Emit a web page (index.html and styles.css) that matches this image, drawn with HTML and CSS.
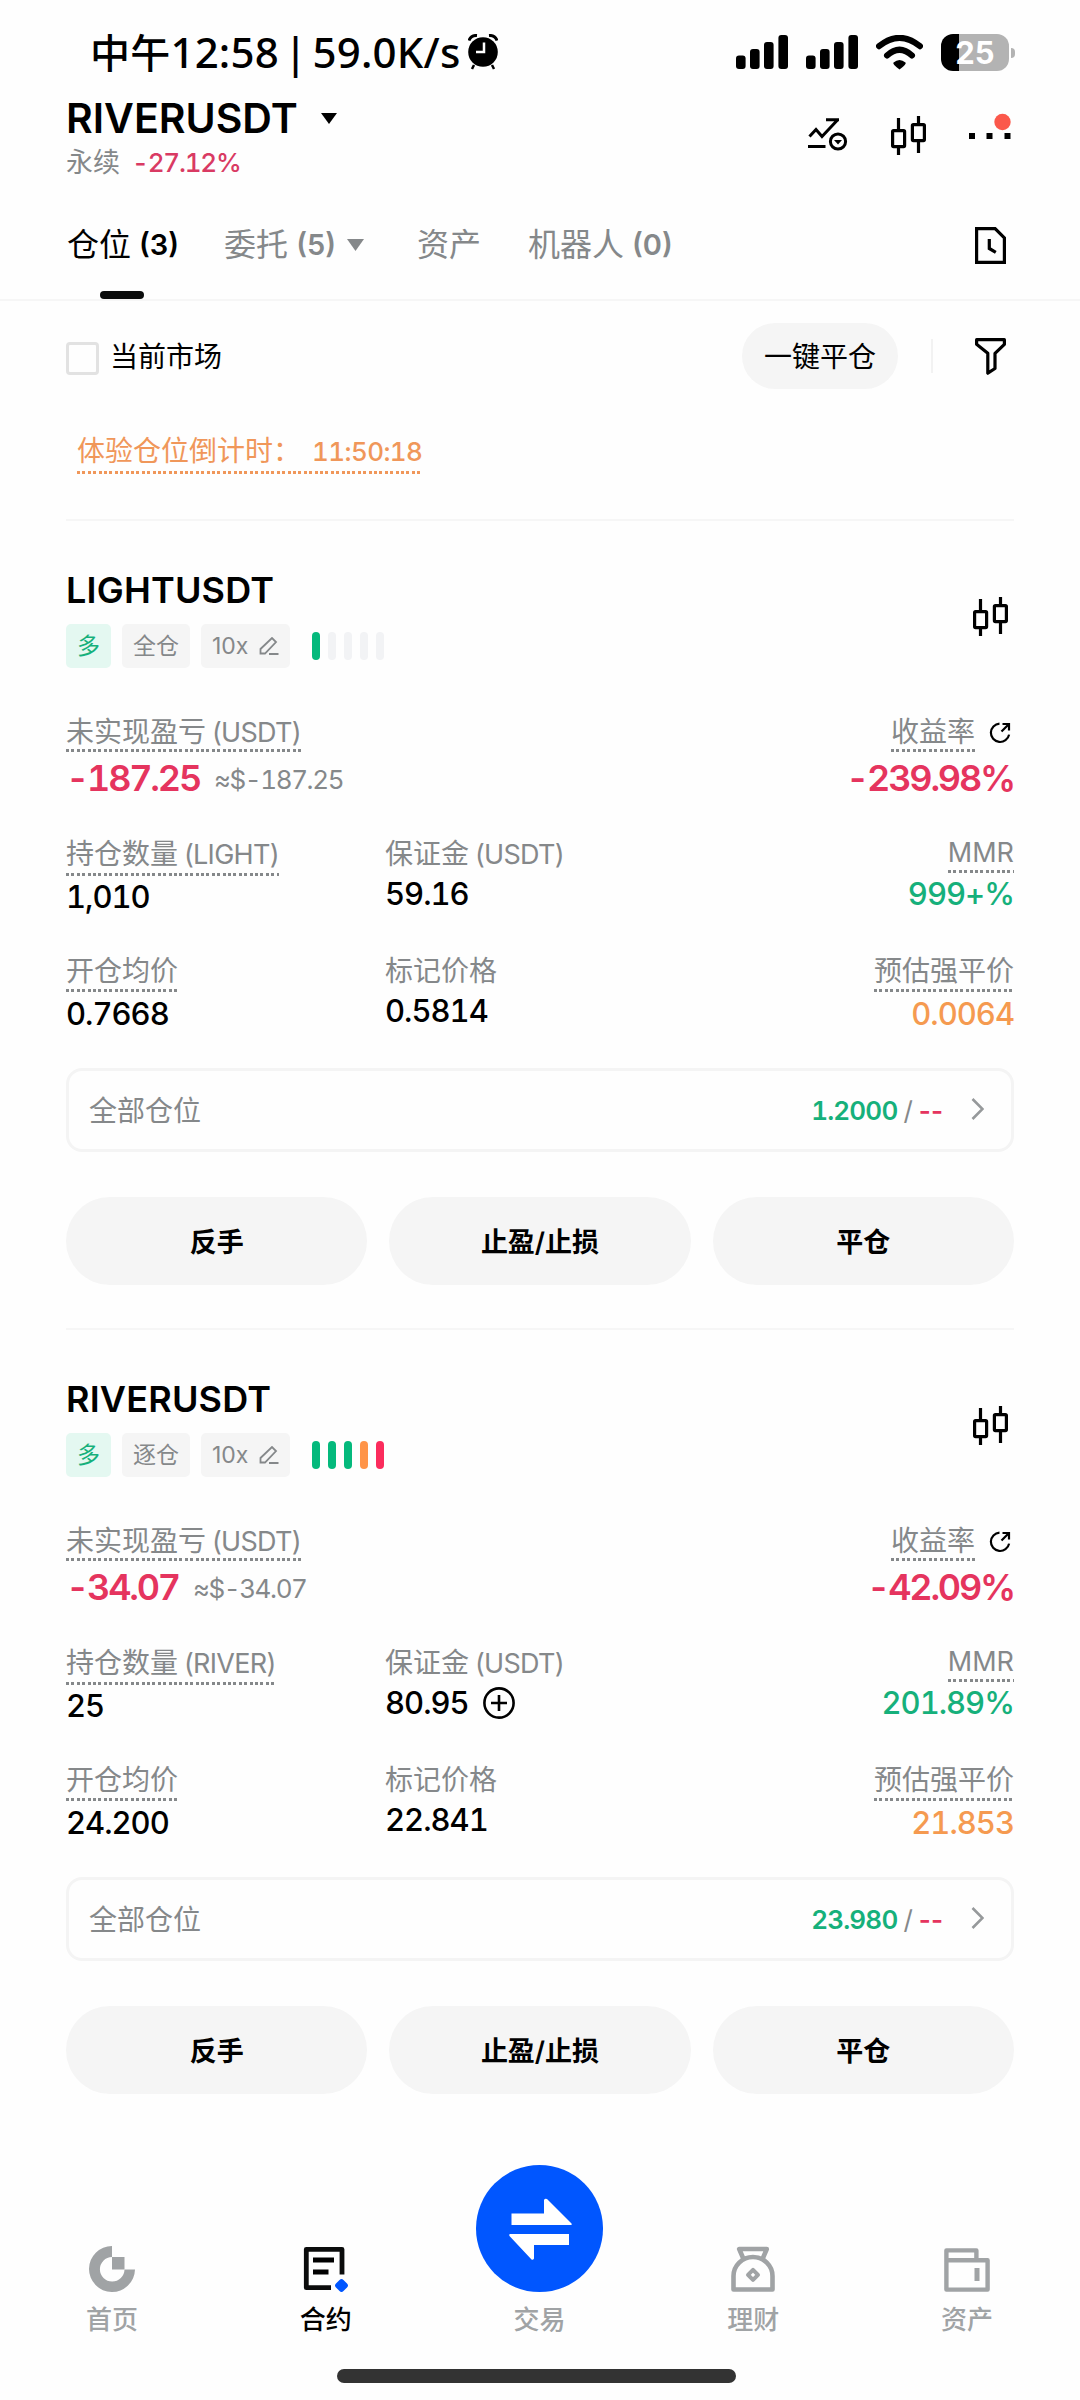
FILE: index.html
```html
<!DOCTYPE html>
<html lang="zh-CN">
<head>
    <meta charset="UTF-8">
    <meta name="viewport" content="width=device-width, initial-scale=1.0">
    <title>RIVERUSDT 永续</title>
    <link rel="stylesheet" href="styles.css">
</head>
<body>
    <!-- Shared icons -->
    <svg class="sprite">
        <symbol id="candles" viewBox="0 0 35 39">
            <g fill="none" stroke="#000" stroke-width="3.2">
                <path d="M7.5 2v12M7.5 31v8M27.5 0v8M27.5 25v12"/>
                <rect x="1.6" y="14.6" width="12" height="16" rx="1"/>
                <rect x="21.4" y="8.6" width="12" height="16" rx="1"/>
            </g>
        </symbol>
        <symbol id="signal" viewBox="0 0 52 34">
            <rect x="0" y="20.5" width="9.6" height="13.5" rx="3"/>
            <rect x="14" y="14" width="9.6" height="20" rx="3"/>
            <rect x="28" y="7" width="9.6" height="27" rx="3"/>
            <rect x="42.4" y="0" width="9.6" height="34" rx="3"/>
        </symbol>
        <symbol id="edit" viewBox="0 0 20 18">
            <path d="M1.500 16.500v-4.500L13 1l4 4L6 16.500zM10 17h9.500" fill="none" stroke="#85888a" stroke-width="1.800"/>
        </symbol>
        <symbol id="share" viewBox="0 0 22 22">
            <path d="M10.500 1.600a9.200 9.200 0 1 0 9.600 11M12.500 9.500l7-7M13.500 2h6.500v6.500" fill="none" stroke="#000" stroke-width="2.200"/>
        </symbol>
        <symbol id="chevron" viewBox="0 0 13 22">
            <path d="M1.500 1l10 10-10 10" fill="none" stroke="#96999b" stroke-width="2.600"/>
        </symbol>
    </svg>

    <div class="status">
        <span class="status-text"><span class="cn">中午</span>12:58 | 59.0K/s</span>
        <svg class="alarm" width="30" height="36" viewBox="0 0 30 36">
            <path d="M1 6.500Q3 1 9 1.500M29 6.500Q27 1 21 1.500" fill="none" stroke="#000" stroke-width="3"/>
            <circle cx="15" cy="18" r="14.800"/>
            <path d="M6 31l-2 4M24 31l2 4" stroke="#000" stroke-width="2.500"/>
            <path d="M16 8.500V18H8" fill="none" stroke="#fff" stroke-width="2.500"/>
        </svg>
        <div class="status-icons">
            <svg width="52" height="34"><use href="#signal"/></svg>
            <svg width="52" height="34"><use href="#signal"/></svg>
            <svg width="47" height="35" viewBox="0 0 47 35">
                <path d="M3 11.200Q23.500-5.500 44 11.200M11 20.500Q23.500 9 36 20.500" fill="none" stroke="#000" stroke-width="6" stroke-linecap="round"/>
                <path d="M17.500 27.500q6-5 12 0 1.500 1.500-6 7-7.500-5.500-6-7z"/>
            </svg>
            <div class="battery"><span>25</span></div>
        </div>
    </div>

    <header class="header">
        <div>
            <h1>RIVERUSDT <svg width="16" height="11"><path d="M0 0h16l-8 11z"/></svg></h1>
            <p class="sub">永续 <span class="en">-27.12%</span></p>
        </div>
        <div class="header-icons">
            <svg width="40" height="34" viewBox="0 0 40 34">
                <path d="M1.500 18.500l6.500-7 6 7L29.500 2M18 1.700h13M0 28.500h17.500" fill="none" stroke="#000" stroke-width="3"/>
                <circle cx="30" cy="23.500" r="7.600" fill="none" stroke="#000" stroke-width="3"/>
                <path d="M26 22h8l-4 4.500z"/>
            </svg>
            <svg width="35" height="39"><use href="#candles"/></svg>
            <svg class="more" width="42" height="39" viewBox="0 0 42 39">
                <path d="M0 17h6v6H0zM17.500 17h6v6h-6zM35.500 17h6v6h-6z"/>
                <circle cx="33.500" cy="6" r="8.200" fill="#fb584b"/>
            </svg>
        </div>
    </header>

    <nav class="tabs">
        <a class="tab active">仓位 <span class="en">(3)</span></a>
        <a class="tab tab-orders">委托 <span class="en">(5)</span><svg width="17" height="12"><path d="M0 0h17l-8.500 12z" fill="#85888a"/></svg></a>
        <a class="tab tab-assets">资产</a>
        <a class="tab">机器人 <span class="en">(0)</span></a>
        <svg class="history" width="31" height="37" viewBox="0 0 31 37">
            <path d="M1.600 1.600h18.500l9.300 9.300v24.500H1.600zM14.300 12v9.500l6.500 3.800" fill="none" stroke="#000" stroke-width="3.200"/>
        </svg>
    </nav>

    <div class="filters">
        <span class="checkbox"></span>
        <span class="market">当前市场</span>
        <button class="close-all">一键平仓</button>
        <i class="split"></i>
        <svg width="31" height="37" viewBox="0 0 31 37">
            <path d="M1.600 1.700h27.800v4.600l-9.400 9v15.200l-7.200 4.700V15.300l-11.200-9z" fill="none" stroke="#000" stroke-width="3.200" stroke-linejoin="round"/>
        </svg>
    </div>

    <div class="countdown"><span class="dotted">体验仓位倒计时：<span class="en">11:50:18</span></span></div>

    <section class="position">
        <div class="position-head">
            <div>
                <h2>LIGHTUSDT</h2>
                <div class="tags">
                    <span class="tag long">多</span>
                    <span class="tag">全仓</span>
                    <span class="tag lever">10x <svg width="20" height="18"><use href="#edit"/></svg></span>
                    <div class="risk"><i class="green"></i><i></i><i></i><i></i><i></i></div>
                </div>
            </div>
            <svg class="kline" width="35" height="39"><use href="#candles"/></svg>
        </div>
        <div class="pnl">
            <div>
                <div class="label"><span class="dotted">未实现盈亏 <span class="en">(USDT)</span></span></div>
                <div class="big">-187.25<small>≈$-187.25</small></div>
            </div>
            <div class="right">
                <div class="label"><span class="dotted">收益率</span><svg class="share" width="22" height="22"><use href="#share"/></svg></div>
                <div class="big">-239.98%</div>
            </div>
        </div>
        <div class="stats">
            <div>
                <div class="label"><span class="dotted">持仓数量 <span class="en">(LIGHT)</span></span></div>
                <div class="value">1,010</div>
            </div>
            <div>
                <div class="label plain">保证金 <span class="en">(USDT)</span></div>
                <div class="value">59.16</div>
            </div>
            <div class="right">
                <div class="label mmr"><span class="dotted">MMR</span></div>
                <div class="value up">999+%</div>
            </div>
            <div>
                <div class="label"><span class="dotted">开仓均价</span></div>
                <div class="value">0.7668</div>
            </div>
            <div>
                <div class="label plain">标记价格</div>
                <div class="value">0.5814</div>
            </div>
            <div class="right">
                <div class="label"><span class="dotted">预估强平价</span></div>
                <div class="value warn">0.0064</div>
            </div>
        </div>
        <div class="tpsl">
            <span>全部仓位</span>
            <span class="tpsl-value"><b class="up">1.2000</b><i>/</i><b class="down">--</b></span>
            <svg width="13" height="22"><use href="#chevron"/></svg>
        </div>
        <div class="actions">
            <button>反手</button>
            <button>止盈/止损</button>
            <button>平仓</button>
        </div>
    </section>

    <section class="position">
        <div class="position-head">
            <div>
                <h2>RIVERUSDT</h2>
                <div class="tags">
                    <span class="tag long">多</span>
                    <span class="tag">逐仓</span>
                    <span class="tag lever">10x <svg width="20" height="18"><use href="#edit"/></svg></span>
                    <div class="risk"><i class="green"></i><i class="green"></i><i class="green"></i><i class="orange"></i><i class="red"></i></div>
                </div>
            </div>
            <svg class="kline" width="35" height="39"><use href="#candles"/></svg>
        </div>
        <div class="pnl">
            <div>
                <div class="label"><span class="dotted">未实现盈亏 <span class="en">(USDT)</span></span></div>
                <div class="big">-34.07<small>≈$-34.07</small></div>
            </div>
            <div class="right">
                <div class="label"><span class="dotted">收益率</span><svg class="share" width="22" height="22"><use href="#share"/></svg></div>
                <div class="big">-42.09%</div>
            </div>
        </div>
        <div class="stats">
            <div>
                <div class="label"><span class="dotted">持仓数量 <span class="en">(RIVER)</span></span></div>
                <div class="value">25</div>
            </div>
            <div>
                <div class="label plain">保证金 <span class="en">(USDT)</span></div>
                <div class="value">80.95
                    <svg class="plus" width="32" height="32" viewBox="0 0 32 32"><path d="M16 8v16M8 16h16" stroke="#000" stroke-width="2.600"/><circle cx="16" cy="16" r="14.600" fill="none" stroke="#000" stroke-width="2.600"/></svg>
                </div>
            </div>
            <div class="right">
                <div class="label mmr"><span class="dotted">MMR</span></div>
                <div class="value up">201.89%</div>
            </div>
            <div>
                <div class="label"><span class="dotted">开仓均价</span></div>
                <div class="value">24.200</div>
            </div>
            <div>
                <div class="label plain">标记价格</div>
                <div class="value">22.841</div>
            </div>
            <div class="right">
                <div class="label"><span class="dotted">预估强平价</span></div>
                <div class="value warn">21.853</div>
            </div>
        </div>
        <div class="tpsl">
            <span>全部仓位</span>
            <span class="tpsl-value"><b class="up">23.980</b><i>/</i><b class="down">--</b></span>
            <svg width="13" height="22"><use href="#chevron"/></svg>
        </div>
        <div class="actions">
            <button>反手</button>
            <button>止盈/止损</button>
            <button>平仓</button>
        </div>
    </section>

    <footer class="bottom-nav">
        <a>
            <svg width="46" height="46" viewBox="0 0 46 46" fill="#a0a3a5">
                <path d="M23 0v11A12.300 12.300 0 1 0 35.500 23.500H46A23 23 0 1 1 23 0z"/>
                <path d="M23 11h12.500v12.500H23z"/>
            </svg>
            首页
        </a>
        <a class="current">
            <svg width="46" height="46" viewBox="0 0 46 46">
                <path d="M39 28.500V3.300H3.300v38.400H28" fill="none" stroke="#0b0c0c" stroke-width="4.800" stroke-linejoin="round"/>
                <path d="M10 11.500h21v5H10zM10 23.500h15.500v5H10z"/>
                <rect x="33.200" y="34.200" width="10.600" height="10.600" rx="2.800" fill="#0056ff" transform="rotate(45 38.500 39.500)"/>
            </svg>
            合约
        </a>
        <a>
            <svg width="127" height="127" viewBox="0 0 127 127">
                <circle cx="63.500" cy="63.500" r="63.500" fill="#0056ff"/>
                <path d="M35.500 48.500H68V35q1-2 3-1l24.500 24.500q1 1-.5 1.500H35.500zM93 80H58v13.500q-1 2-2.500 1L33.500 71q-1-1.500.5-2H93z" fill="#fff"/>
            </svg>
            交易
        </a>
        <a>
            <svg width="44" height="46" viewBox="0 0 44 46" fill="none" stroke="#a0a3a5" stroke-width="4.600" stroke-linejoin="round">
                <path d="M2.500 43.500V30a19.500 19 0 0 1 39 0v13.500zM12.500 13L8.200 3h27.600l-4.300 10"/>
                <path d="M22 23.800l5 5-5 5-5-5z" stroke-width="4"/>
            </svg>
            理财
        </a>
        <a>
            <svg width="46" height="44" viewBox="0 0 46 44" fill="none" stroke="#a0a3a5" stroke-width="4.400" stroke-linejoin="round">
                <path d="M2.400 12.200h41.200v29.400H2.400zM2.400 12.200V2.400h30v9.800"/>
                <path d="M33 20v13" stroke-width="5"/>
            </svg>
            资产
        </a>
    </footer>
    <div class="home-bar"></div>
</body>
</html>
```
FILE: styles.css
```css
* {
    box-sizing: border-box;
}
body {
    width: 1080px;
    height: 2400px;
    margin: 0;
    display: flex;
    flex-direction: column;
    overflow: hidden;
    background-color: #fefefe;
    color: #000;
    font-family: Inter, "Noto Sans CJK SC", sans-serif;
    font-size: 28px;
    font-weight: 400;
}
h1, h2, p {
    margin: 0;
}
svg {
    display: block;
    flex-shrink: 0;
}
button {
    border: none;
    padding: 0 0 2px;
    color: #000;
    background-color: #f5f5f5;
    font-family: inherit;
}
i {
    font-style: normal;
}
.sprite {
    display: none;
}
.en {
    font-size: 26px;
}
.right {
    text-align: right;
}
.up {
    color: #16b07b;
}
.down {
    color: #e5345e;
}
.warn {
    color: #f59a50;
}

/* Status bar */
.status {
    height: 92px;
    padding: 12px 65px 0 90px;
    display: flex;
    align-items: center;
}
.status-text {
    font-family: "Noto Sans", "Noto Sans CJK SC", sans-serif;
    font-size: 42px;
    font-weight: 500;
    line-height: 60px;
    letter-spacing: 0.2px;
    word-spacing: -6px;
    white-space: nowrap;
}
.status-text .cn {
    font-size: 40px;
}
.alarm {
    margin-left: 7px;
}
.status-icons {
    margin-left: auto;
    display: flex;
    align-items: center;
    gap: 18px;
}
.battery {
    position: relative;
    width: 68px;
    height: 37px;
    margin-right: 6px;
    border-radius: 12px;
    background: linear-gradient(90deg, #000 18px, #b3b3b3 18px);
    color: #fff;
    font-size: 31px;
    font-weight: 700;
    line-height: 37px;
    text-align: center;
}
.battery::after {
    content: "";
    position: absolute;
    right: -6px;
    top: 14px;
    width: 4px;
    height: 10px;
    border-radius: 0 5px 5px 0;
    background-color: #b3b3b3;
}

/* Pair name */
.header {
    padding: 3px 69px 0 66px;
    height: 98px;
    display: flex;
    justify-content: space-between;
}
.header h1 {
    display: flex;
    align-items: center;
    gap: 23px;
    font-size: 41px;
    font-weight: 600;
    line-height: 46px;
}
.sub {
    margin-top: 5px;
    display: flex;
    gap: 12px;
    line-height: 34px;
    font-size: 27px;
    color: #85888a;
}
.sub .en {
    color: #d93a63;
    font-weight: 500;
    font-variant-numeric: tabular-nums;
    letter-spacing: -1.2px;
}
.header-icons {
    height: 80px;
    display: flex;
    align-items: center;
    gap: 43px;
}
.more {
    overflow: visible;
}

/* Tabs */
.tabs {
    height: 111px;
    padding: 0 74px 0 67px;
    display: flex;
    border-bottom: 2px solid #f6f6f6;
    line-height: 110px;
}
.tab {
    position: relative;
    margin-right: 45px;
    display: flex;
    align-items: center;
    gap: 8px;
    font-size: 32px;
    color: #85888a;
}
.tab .en {
    font-size: 29px;
    font-weight: 600;
}
.tab.active {
    color: #000;
}
.tab.active::after {
    content: "";
    position: absolute;
    left: 33px;
    bottom: 0;
    width: 44px;
    height: 8px;
    border-radius: 4px;
    background-color: #0b0c0c;
}
.tab-orders {
    margin-right: 56px;
}
.tab-orders svg {
    margin-left: 3px;
    margin-right: -3px;
}
.tab-assets {
    margin-right: 47px;
}
.history {
    margin: 37px 0 0 auto;
}

/* Filter row */
.filters {
    height: 110px;
    padding: 0 74px 0 66px;
    display: flex;
    align-items: center;
}
.checkbox {
    width: 33px;
    height: 33px;
    margin: 4px 11px 0 0;
    border: 3px solid #e2e2e2;
    border-radius: 4px;
}
.market {
    padding-bottom: 2px;
}
.close-all {
    width: 156px;
    height: 66px;
    margin-left: auto;
    border-radius: 33px;
    font-size: 28px;
}
.split {
    width: 2px;
    height: 34px;
    margin: 0 42px 0 33px;
    background-color: #f2f2f2;
}
.countdown {
    height: 108px;
    padding: 20px 0 0 77px;
    line-height: 41px;
    color: #f0975a;
}
.countdown .dotted {
    padding-bottom: 2px;
}
.countdown .en {
    margin-left: 11px;
    font-weight: 500;
    font-variant-numeric: tabular-nums;
    letter-spacing: -0.6px;
}
.dotted {
    display: inline-block;
    padding-bottom: 1px;
    background: repeating-linear-gradient(90deg, currentColor 0 3px, transparent 3px 5.4px) left bottom / 100% 3px no-repeat;
}

/* Position card */
.position {
    height: 809px;
    margin: 0 66px;
    border-top: 2px solid #f6f6f6;
    padding-top: 47px;
}
.position-head {
    display: flex;
    justify-content: space-between;
}
.position h2 {
    font-size: 36px;
    font-weight: 600;
    line-height: 44px;
    letter-spacing: 0.2px;
}
.kline {
    margin: 29px 6px 0 0;
}
.tags {
    margin-top: 12px;
    display: flex;
    align-items: center;
    gap: 11px;
}
.tag {
    height: 44px;
    padding: 0 11px;
    border-radius: 5px;
    background-color: #f5f5f5;
    color: #85888a;
    font-size: 23px;
    line-height: 44px;
}
.tag.long {
    background-color: #e4f8f1;
    color: #16b07b;
}
.tag.lever {
    width: 89px;
    display: flex;
    align-items: center;
    justify-content: space-between;
}
.risk {
    margin-left: 11px;
    display: flex;
    gap: 8px;
}
.risk i {
    width: 8px;
    height: 28px;
    border-radius: 4px;
    background-color: #f2f3f5;
}
.risk .green {
    background-color: #04b97c;
}
.risk .orange {
    background-color: #ff9448;
}
.risk .red {
    background-color: #fb2c5c;
}
.pnl {
    height: 87px;
    margin-top: 45px;
    display: flex;
    justify-content: space-between;
}
.label {
    height: 42px;
    margin-bottom: 1px;
    line-height: 40px;
    color: #85888a;
    white-space: nowrap;
}
.label .en {
    margin-left: -2px;
    font-size: 27px;
    letter-spacing: -0.7px;
}
.pnl .label {
    height: 40px;
    margin-bottom: 3px;
    line-height: 39px;
}
.pnl .dotted {
    padding-bottom: 0;
}
.right .label {
    display: flex;
    justify-content: flex-end;
    align-items: flex-start;
}
.share {
    margin: 9px 3px 0 14px;
}
.big {
    font-size: 36px;
    font-weight: 600;
    font-variant-numeric: tabular-nums;
    line-height: 44px;
    letter-spacing: -2.2px;
    color: #e5345e;
}
.big small {
    margin-left: 14px;
    font-size: 26px;
    font-weight: 400;
    letter-spacing: -1.4px;
    vertical-align: 2px;
    color: #85888a;
}
.stats {
    margin-top: 34px;
    display: grid;
    grid-template-columns: 319px 1fr auto;
    grid-auto-rows: 83px;
    row-gap: 34px;
}
.label.plain {
    height: 39px;
}
.label.mmr {
    height: 39px;
    font-size: 27px;
    line-height: 38px;
}
.value {
    display: inline-flex;
    align-items: center;
    gap: 14px;
    height: 40px;
    font-size: 31px;
    font-weight: 500;
    font-variant-numeric: tabular-nums;
    line-height: 40px;
    letter-spacing: -1px;
}
.tpsl {
    height: 84px;
    margin-top: 34px;
    padding: 0 27px 2px 20px;
    display: flex;
    align-items: center;
    border: 3px solid #f4f4f4;
    border-radius: 16px;
    color: #85888a;
}
.tpsl-value {
    margin: 2px 28px 0 auto;
    display: flex;
    gap: 6px;
    font-size: 26px;
}
.tpsl-value b {
    font-weight: 600;
}
.tpsl-value .up {
    font-variant-numeric: tabular-nums;
    letter-spacing: -0.8px;
}
.actions {
    margin-top: 45px;
    display: grid;
    grid-template-columns: repeat(3, 1fr);
    gap: 22px;
}
.actions button {
    height: 88px;
    border-radius: 44px;
    font-size: 27px;
    font-weight: 600;
}

/* Bottom navigation */
.bottom-nav {
    height: 173px;
    margin-top: auto;
    padding: 0 6px 0 5px;
    display: grid;
    grid-template-columns: repeat(5, 1fr);
}
.bottom-nav a {
    display: flex;
    flex-direction: column;
    align-items: center;
    justify-content: flex-end;
    gap: 9px;
    color: #a0a3a5;
    font-size: 26px;
    font-weight: 500;
    line-height: 38px;
}
.bottom-nav .current {
    color: #000;
}
.home-bar {
    flex-shrink: 0;
    width: 399px;
    height: 14px;
    margin: 31px 0 17px 337px;
    border-radius: 7px;
    background-color: #333;
}
```
